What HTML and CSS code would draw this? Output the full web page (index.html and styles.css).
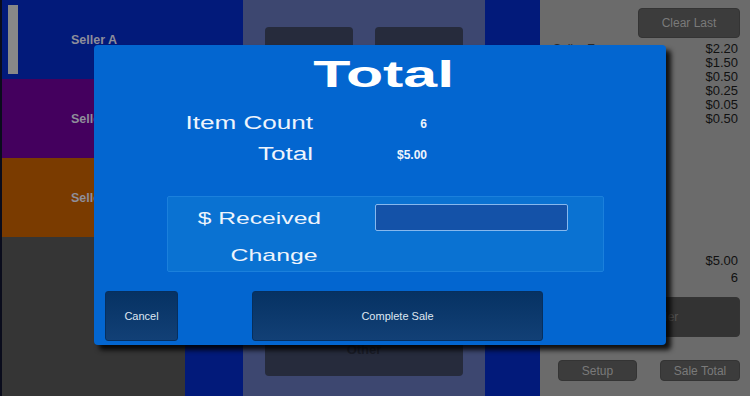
FILE: index.html
```html
<!DOCTYPE html>
<html lang="en">
<head>
    <meta charset="UTF-8">
    <title>Register</title>
    <link rel="stylesheet" href="styles.css">
</head>
<body>
    <div class="screen">
        <div class="edge"></div>
        <div class="sellers">
            <div class="seller seller_a"><span class="thumb"></span>Seller A</div>
            <div class="seller seller_b">Seller B</div>
            <div class="seller seller_c">Seller C</div>
            <div class="seller_rest"></div>
        </div>
        <div class="keys">
            <div class="key_row">
                <div class="key"></div>
                <div class="key"></div>
            </div>
            <div class="key key_wide">Other</div>
        </div>
        <div class="strip"></div>
        <div class="sale">
            <div class="sale_top">
                <button class="grey_btn clear_btn">Clear Last</button>
            </div>
            <div class="lines">
                <div class="line"><span>Seller E</span><span>$2.20</span></div>
                <div class="line"><span></span><span>$1.50</span></div>
                <div class="line"><span></span><span>$0.50</span></div>
                <div class="line"><span></span><span>$0.25</span></div>
                <div class="line"><span></span><span>$0.05</span></div>
                <div class="line"><span></span><span>$0.50</span></div>
            </div>
            <div class="sums">
                <div>$5.00</div>
                <div>6</div>
            </div>
            <button class="grey_btn next_btn">Next Seller</button>
            <div class="sale_bottom">
                <button class="grey_btn small_btn">Setup</button>
                <button class="grey_btn small_btn">Sale Total</button>
            </div>
        </div>
    </div>

    <div class="dialog">
        <div class="dialog_title"><span class="wide_c">Total</span></div>
        <div class="summary">
            <div class="label"><span class="wide">Item Count</span></div>
            <div class="value">6</div>
            <div class="label"><span class="wide">Total</span></div>
            <div class="value">$5.00</div>
        </div>
        <div class="pay_block">
            <div class="pay_label"><span class="wide">$ Received</span></div>
            <input type="text" class="pay_input" id="received_input">
            <div class="pay_label change_label"><span class="wide">Change</span></div>
            <div class="pay_value"></div>
        </div>
        <div class="dialog_buttons">
            <button class="dlg_btn cancel_btn">Cancel</button>
            <button class="dlg_btn complete_btn">Complete Sale</button>
        </div>
    </div>
</body>
</html>
```

FILE: styles.css
```css
body {
    margin: 0;
    font-family: "Liberation Sans", Arial, sans-serif;
    overflow: hidden;
}
button {
    font-family: "Liberation Sans", Arial, sans-serif;
    outline: none;
    cursor: pointer;
}
.screen {
    display: flex;
    width: 750px;
    height: 396px;
    background-color: #111;
}
.edge {
    width: 2px;
    background-color: #0a0c1c;
}
.sellers {
    width: 241px;
    display: flex;
    flex-direction: column;
    background-color: #021a7a;
}
.seller {
    position: relative;
    height: 79px;
    display: flex;
    align-items: center;
    padding-left: 69px;
    font-size: 12.5px;
    font-weight: bold;
    color: #8e8e9a;
}
.seller_a {
    background-color: #021a7a;
}
.seller_b {
    background-color: #44005e;
}
.seller_c {
    background-color: #7a3b00;
}
.thumb {
    position: absolute;
    left: 6px;
    top: 5px;
    width: 10px;
    height: 69px;
    background-color: #888;
}
.seller_rest {
    flex: 1;
    width: 183px;
    background-color: #353535;
}
.keys {
    width: 242px;
    background-color: #3d4770;
    display: flex;
    flex-direction: column;
    justify-content: space-between;
    padding: 27px 22px 20px 22px;
    box-sizing: border-box;
}
.key_row {
    display: flex;
    gap: 22px;
}
.key {
    width: 88px;
    height: 60px;
    border-radius: 4px;
    background-color: #262b3c;
}
.key_wide {
    width: 198px;
    height: 52px;
    display: flex;
    justify-content: center;
    padding-top: 18px;
    box-sizing: border-box;
    font-size: 13px;
    font-weight: bold;
    color: #1a1d28;
}
.strip {
    width: 55px;
    background-color: #021a7a;
}
.sale {
    width: 210px;
    background-color: #6b6b6b;
    display: flex;
    flex-direction: column;
    padding-top: 8px;
    box-sizing: border-box;
}
.grey_btn {
    border: 1px solid #343434;
    border-radius: 4px;
    background-color: #3c3c3c;
    color: #7a7a7a;
    font-size: 12px;
    padding: 0;
}
.sale_top {
    display: flex;
    justify-content: flex-end;
    padding-right: 10px;
}
.clear_btn {
    width: 102px;
    height: 30px;
}
.lines {
    margin-top: 4px;
    padding: 0 12px 0 13px;
}
.line {
    display: flex;
    justify-content: space-between;
    height: 14px;
    line-height: 14px;
    font-size: 13px;
    color: #111;
}
.line span:first-child {
    font-size: 12px;
    color: #2a2a2a;
}
.sums {
    margin-top: 126px;
    padding-right: 12px;
    text-align: right;
    font-size: 13px;
    line-height: 17px;
    color: #111;
}
.next_btn {
    margin: 11px 10px 0 18px;
    height: 40px;
    background-color: #333;
    color: #555;
}
.sale_bottom {
    margin-top: 23px;
    display: flex;
    gap: 23px;
    padding-left: 18px;
}
.small_btn {
    width: 79px;
    height: 21px;
}
.small_btn + .small_btn {
    width: 80px;
}

.dialog {
    position: absolute;
    left: 94px;
    top: 45px;
    width: 572px;
    height: 300px;
    box-sizing: border-box;
    padding-top: 10px;
    border-radius: 4px;
    background-color: #0366d0;
    box-shadow: 5px 5px 5px rgba(0, 0, 0, 0.85);
    color: #fff;
}
.dialog_title {
    height: 40px;
    line-height: 40px;
    text-align: center;
    padding-left: 7px;
    font-size: 36px;
    font-weight: bold;
}
.wide_c {
    display: inline-block;
    transform: scaleX(1.69);
}
.wide {
    display: inline-block;
    transform: scaleX(1.45);
    transform-origin: right center;
}
.summary {
    margin-top: 13px;
    display: grid;
    grid-template-columns: 219px 114px;
    grid-auto-rows: 31px;
    align-items: center;
}
.label {
    text-align: right;
    font-size: 18px;
    color: #eef4fc;
}
.value {
    text-align: right;
    font-size: 12px;
    font-weight: bold;
    color: #eef4fc;
}
.pay_block {
    margin: 26px 0 0 73px;
    width: 437px;
    height: 76px;
    box-sizing: border-box;
    padding-top: 7px;
    border: 1px solid #1b80dc;
    border-radius: 2px;
    background-color: #0a72d2;
    display: grid;
    grid-template-columns: 153px 193px;
    grid-template-rows: 29px 28px;
    column-gap: 54px;
    row-gap: 9px;
    align-items: center;
}
.pay_label {
    text-align: right;
    font-size: 17px;
    color: #eef4fc;
}
.change_label {
    padding-right: 3px;
}
.change_label .wide {
    transform: scaleX(1.46);
}
.pay_input {
    width: 193px;
    height: 27px;
    margin-top: -2px;
    box-sizing: border-box;
    border: 1px solid #86b8ee;
    border-radius: 2px;
    background-color: #1452a8;
    outline: none;
}
.dialog_buttons {
    margin-top: 19px;
    display: flex;
    gap: 74px;
    padding-left: 11px;
}
.dlg_btn {
    height: 50px;
    border: 1px solid #062f5e;
    border-radius: 3px;
    background: linear-gradient(#063263, #124076);
    color: #dfe7f1;
    font-size: 11px;
    padding: 0;
}
.cancel_btn {
    width: 73px;
}
.complete_btn {
    width: 291px;
}
```
